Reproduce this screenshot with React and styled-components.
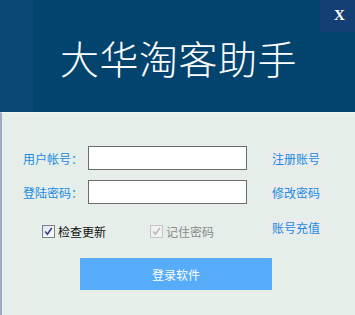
import React from "react";
import styled, { createGlobalStyle } from "styled-components";

const Global = createGlobalStyle`
  html, body { margin: 0; padding: 0; }
  body { font-family: "Noto Sans CJK SC", "Liberation Sans", sans-serif; }
`;

const Window = styled.div`
  width: 355px;
  height: 315px;
  display: flex;
  flex-direction: column;
  overflow: hidden;
  background: #e5eee8;
`;

const Header = styled.div`
  position: relative;
  height: 112px;
  flex: none;
  display: flex;
  align-items: center;
  justify-content: center;
  background: linear-gradient(to right, #0a4876 0, #0a4876 33px, #03446f 33px);
`;

const Title = styled.h1`
  margin: 0;
  margin-top: 2px;
  margin-left: 2px;
  font-family: "Noto Sans CJK SC", serif;
  font-weight: 300;
  font-size: 39px;
  letter-spacing: 0.5px;
  color: #ffffff;
  line-height: 1;
`;

const CloseButton = styled.button`
  position: absolute;
  top: 0;
  right: 0;
  width: 35px;
  height: 32px;
  border: none;
  padding: 0 0 2px 4px;
  background: #133f74;
  color: #ffffff;
  font-family: "Liberation Serif", serif;
  font-weight: bold;
  font-size: 15px;
  cursor: pointer;
`;

const Body = styled.div`
  flex: 1;
  border-left: 2px solid #9eacc2;
  border-top: 1px solid #f2f6f3;
  padding: 33px 0 0 21px;
  display: flex;
  flex-direction: column;
`;

const FormGrid = styled.div`
  display: grid;
  grid-template-columns: 65px 176px 64px;
  grid-template-rows: 24px 24px 26px;
  column-gap: 0;
  row-gap: 10px;
`;

const Label = styled.label`
  align-self: center;
  font-size: 12px;
  color: #1a8ae4;
  white-space: nowrap;
`;

const Input = styled.input`
  box-sizing: border-box;
  width: 159px;
  height: 24px;
  margin: 0;
  border: 1px solid #6b6b6b;
  background: #ffffff;
  outline: none;
`;

const LinkButton = styled.button`
  align-self: ${(p) => (p.$top ? "start" : "center")};
  margin-top: ${(p) => (p.$top ? "5px" : "0")};
  width: 64px;
  height: 17px;
  padding: 0;
  border: none;
  background: #e9ecea;
  color: #1a8ae4;
  font-family: inherit;
  font-size: 12px;
  line-height: 17px;
  cursor: pointer;
`;

const CheckRow = styled.div`
  grid-column: 1 / span 2;
  align-self: end;
  display: flex;
  align-items: center;
  padding-left: 19px;
  gap: 44px;
`;

const CheckLabel = styled.label`
  display: flex;
  align-items: center;
  gap: 3px;
  font-size: 12px;
  color: ${(p) => (p.$disabled ? "#8a8a8a" : "#111111")};
`;

const Box = styled.span`
  box-sizing: border-box;
  width: 13px;
  height: 13px;
  display: flex;
  align-items: center;
  justify-content: center;
  border: 1px solid ${(p) => (p.$disabled ? "#c4c4c4" : "#7a7f8c")};
  background: ${(p) =>
    p.$disabled ? "#f2f2f2" : "linear-gradient(135deg, #dfe3ea, #ffffff)"};
`;

const LoginButton = styled.button`
  margin: 18px 0 0 57px;
  width: 192px;
  height: 32px;
  border: none;
  background: #56acf8;
  color: #ffffff;
  font-family: inherit;
  font-size: 12px;
  cursor: pointer;
`;

const Check = ({ disabled }) => (
  <Box $disabled={disabled}>
    <svg width="9" height="9" viewBox="0 0 9 9">
      <path
        d="M1.2 4.6 L3.4 7.2 L7.8 1"
        fill="none"
        stroke={disabled ? "#b8b8b8" : "#36428a"}
        strokeWidth="1.6"
      />
    </svg>
  </Box>
);

export default function App() {
  return (
    <>
      <Global />
      <Window>
        <Header>
          <Title>大华淘客助手</Title>
          <CloseButton>X</CloseButton>
        </Header>
        <Body>
          <FormGrid>
            <Label>用户帐号：</Label>
            <Input />
            <LinkButton>注册账号</LinkButton>
            <Label>登陆密码：</Label>
            <Input type="password" />
            <LinkButton>修改密码</LinkButton>
            <CheckRow>
              <CheckLabel>
                <Check />
                检查更新
              </CheckLabel>
              <CheckLabel $disabled>
                <Check disabled />
                记住密码
              </CheckLabel>
            </CheckRow>
            <LinkButton $top>账号充值</LinkButton>
          </FormGrid>
          <LoginButton>登录软件</LoginButton>
        </Body>
      </Window>
    </>
  );
}
